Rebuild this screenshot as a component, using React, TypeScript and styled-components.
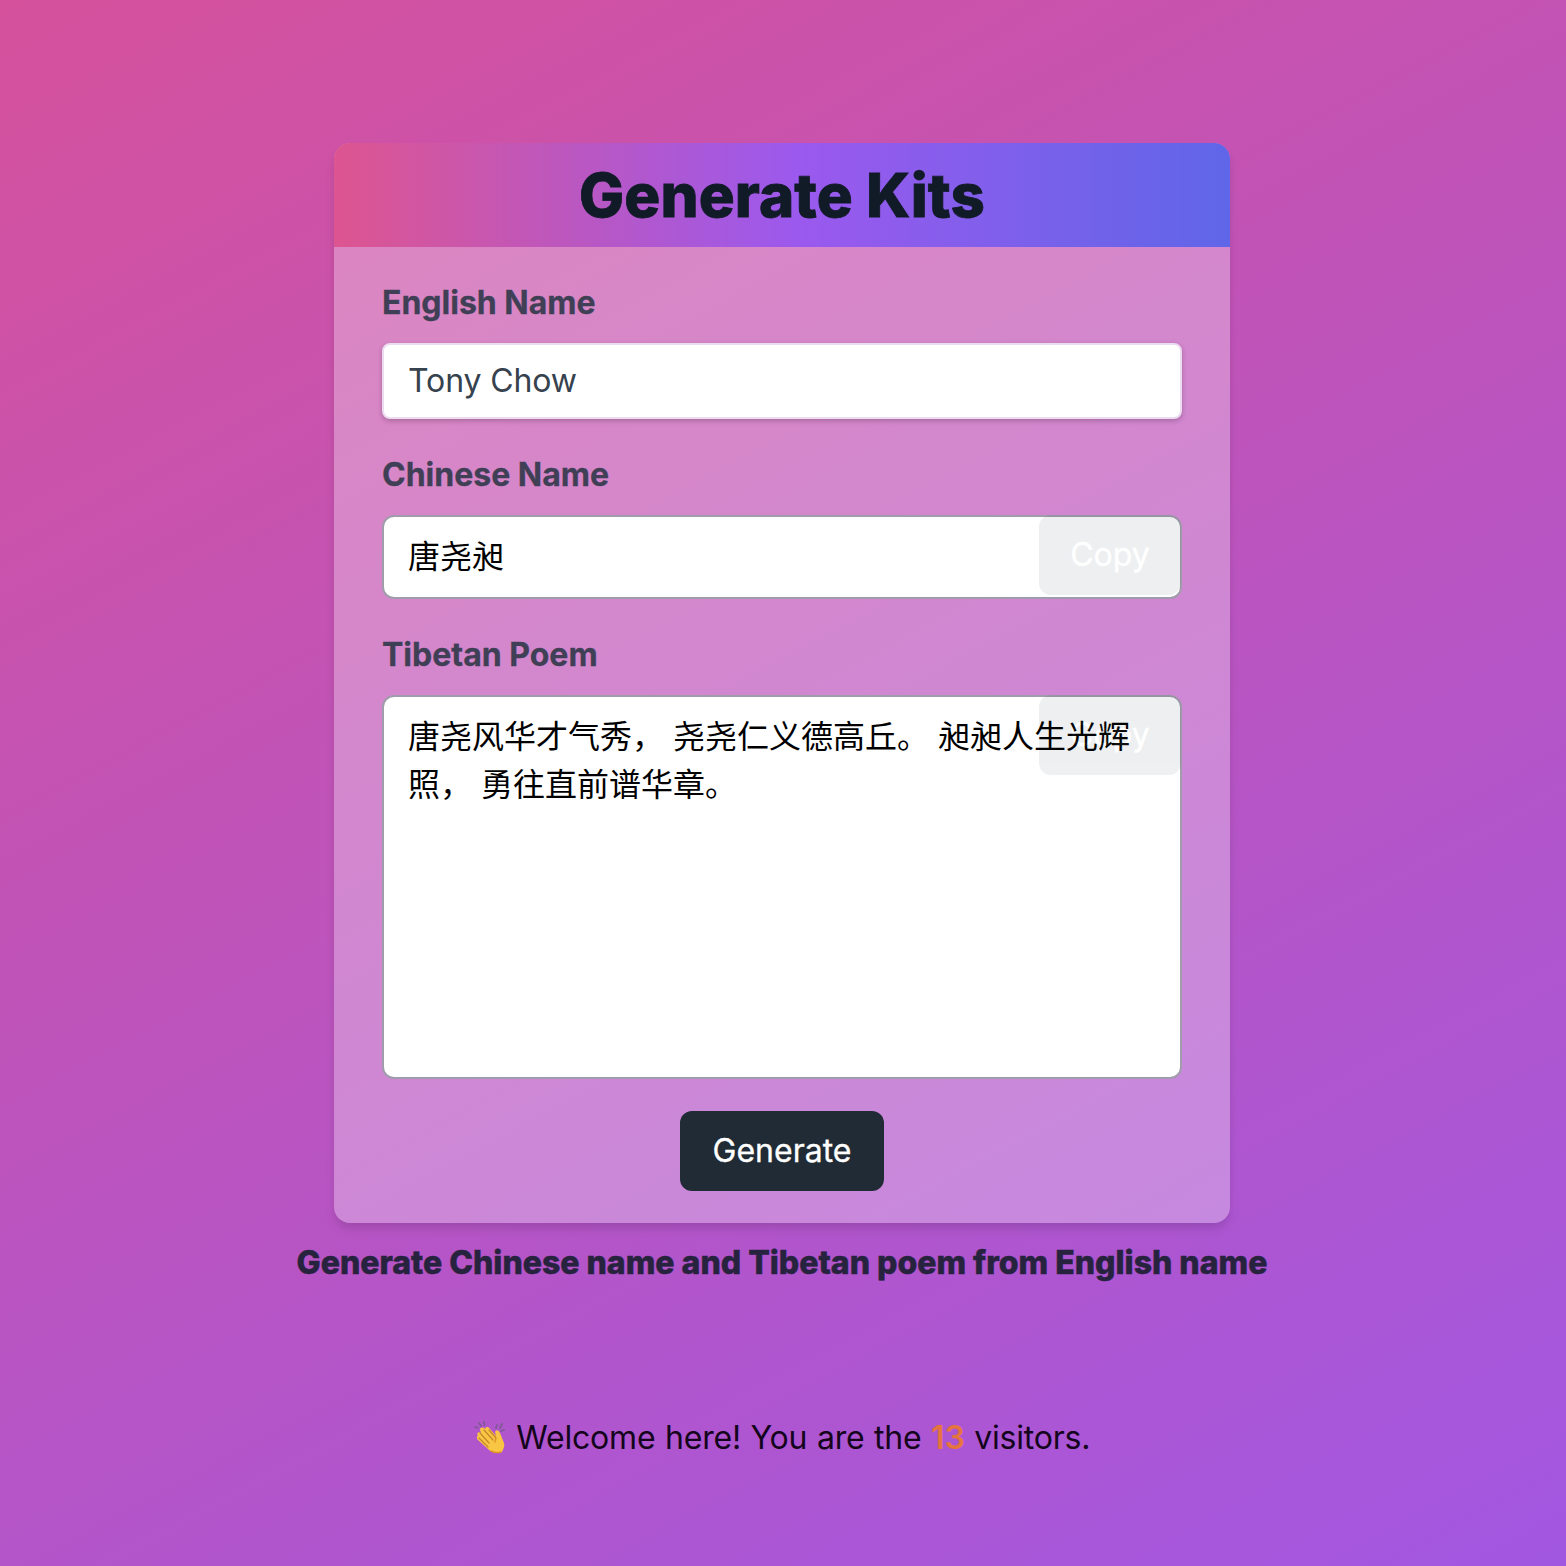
import React, { useState } from 'react';
import styled, { createGlobalStyle } from 'styled-components';

const GlobalStyle = createGlobalStyle`
    * {
        box-sizing: border-box;
    }

    body {
        margin: 0;
        font-family: Inter, "Noto Sans CJK SC", sans-serif;
        font-size: 32px;
        line-height: 48px;
    }
`

const Page = styled.div`
    height: 1566px;
    padding-top: 143px;
    display: flex;
    flex-direction: column;
    align-items: center;
    background: linear-gradient(152deg, #d5519c 0%, #a257e1 100%);
`

const Card = styled.div`
    width: 896px;
    margin-right: 2px;
    border-radius: 16px;
    background-color: rgba(255, 255, 255, 0.3);
    box-shadow: 0 8px 12px -2px rgba(0, 0, 0, 0.1), 0 4px 8px -2px rgba(0, 0, 0, 0.06);
`

const CardHeader = styled.h1`
    margin: 0;
    padding: 16px 0;
    border-radius: 16px 16px 0 0;
    background: linear-gradient(to right, #dd5590, #9b59ee 52%, #5f66e8);
    color: #111a27;
    font-size: 60px;
    font-weight: 800;
    line-height: 72px;
    letter-spacing: 0.1px;
    text-align: center;
    -webkit-text-stroke: 0.8px #111a27;
`

const CardBody = styled.div`
    padding: 32px 48px;
    display: flex;
    flex-direction: column;
    gap: 32px;
`

const Field = styled.div`
    display: flex;
    flex-direction: column;
    gap: 16px;
`

const Label = styled.div`
    color: #3f3f56;
    font-weight: 700;
    -webkit-text-stroke: 0.3px #3f3f56;
`

const NameBox = styled.div`
    padding: 16px 24px;
    border: 2px solid #ecdcf0;
    border-radius: 8px;
    background-color: #fff;
    box-shadow: 0 2px 6px rgba(0, 0, 0, 0.1), 0 2px 4px rgba(0, 0, 0, 0.12);
    color: #36424d;
    line-height: 40px;
    letter-spacing: -0.1px;
`

const ResultBox = styled.div<{ $height: number }>`
    position: relative;
    height: ${({ $height }) => $height}px;
    padding: 16px 24px;
    border: 2px solid #a09cac;
    border-radius: 12px;
    background-color: #fff;
    color: #000;
`

const Button = styled.button<{ $width: number }>`
    width: ${({ $width }) => $width}px;
    height: 80px;
    padding: 0;
    border: none;
    border-radius: 12px;
    background-color: #202b35;
    color: #fff;
    font: inherit;
    -webkit-text-stroke: 0.3px #fff;
    cursor: pointer;
`

const CopyButton = styled(Button)`
    position: absolute;
    top: -2px;
    right: -1px;
    opacity: 0.07;
`

const GenerateButton = styled(Button)`
    align-self: center;
`

const Summary = styled.h2`
    margin: 16px 2px 0 0;
    color: #27233f;
    font-size: 32px;
    font-weight: 800;
    line-height: 48px;
    -webkit-text-stroke: 0.5px #27233f;
`

const Visitors = styled.div`
    margin: 127px 3px 0 0;
    display: flex;
    align-items: center;
    color: #14051c;
    letter-spacing: -0.2px;
    word-spacing: 0.8px;
    white-space: pre;
`

const Count = styled.span`
    color: #e5743f;
    font-weight: 600;
`

const ClapIcon = () => (
    <svg width="34" height="34" viewBox="0 0 34 34" fill="none">
        <g stroke="#7d5a93" strokeWidth="1.8" strokeLinecap="round">
            <path d="M2 6l3 1M6 2l2 3M11 1l.4 3M24 4l-1 3M29 3l-2 4M31 9l-3 1" />
        </g>
        <path d="M5 15C3 12 6 10 8 12L7 9c0-3 3-3 5-1 1-3 4-2 5 0l6 7-1-4c1-3 4-2 5 1l4 10c1 4-1 6-2 9-5 2-10 1-14-3L5 19c-2-2-1-4 0-4z" fill="#f9c544" />
        <path d="M7 12l9 10M11 9l9 10M16 9l7 8M6 17l9 9" stroke="#c48629" strokeWidth="1.2" strokeLinecap="round" />
        <path d="M22 15c1 2 1 4 0 6M18 30c4 2 7 2 10 1" stroke="#dd9226" strokeWidth="1.4" strokeLinecap="round" />
    </svg>
)

const App = () => {
    const [name] = useState('唐尧昶');
    const [poem] = useState('唐尧风华才气秀， 尧尧仁义德高丘。 昶昶人生光辉照， 勇往直前谱华章。');

    return(
        <>
            <GlobalStyle />
            <Page>
                <Card>
                    <CardHeader>Generate Kits</CardHeader>
                    <CardBody>
                        <Field>
                            <Label>English Name</Label>
                            <NameBox>Tony Chow</NameBox>
                        </Field>
                        <Field>
                            <Label>Chinese Name</Label>
                            <ResultBox $height={84}>
                                {name}
                                <CopyButton type="button" $width={142}>Copy</CopyButton>
                            </ResultBox>
                        </Field>
                        <Field>
                            <Label>Tibetan Poem</Label>
                            <ResultBox $height={384}>
                                {poem}
                                <CopyButton type="button" $width={142}>Copy</CopyButton>
                            </ResultBox>
                        </Field>
                        <GenerateButton type="button" $width={204}>Generate</GenerateButton>
                    </CardBody>
                </Card>
                <Summary>Generate Chinese name and Tibetan poem from English name</Summary>
                <Visitors>
                    <ClapIcon />
                    <span> Welcome here! You are the <Count>13</Count> visitors.</span>
                </Visitors>
            </Page>
        </>
    )
};

export default App;
